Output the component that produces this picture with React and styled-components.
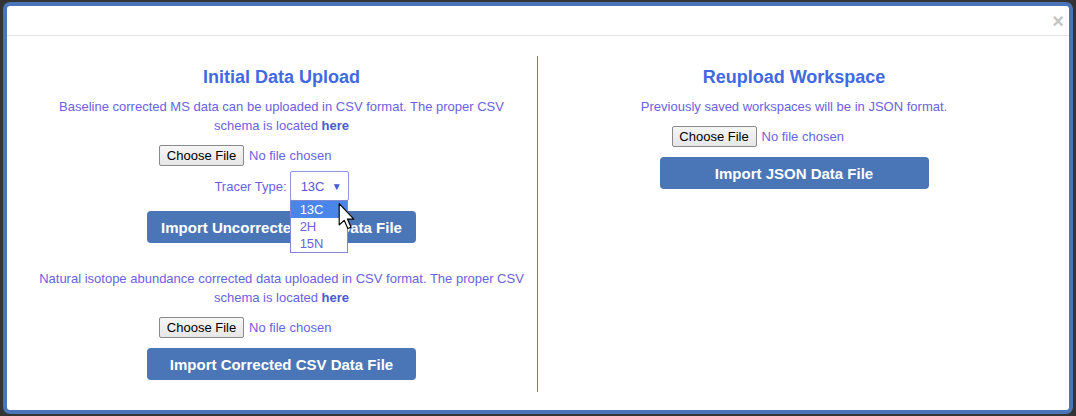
import React from "react";
import styled, { createGlobalStyle } from "styled-components";

const GlobalStyle = createGlobalStyle`
  html, body { margin: 0; padding: 0; }
  body {
    background: #343434;
    font-family: "Liberation Sans", Arial, sans-serif;
  }
`;

const Page = styled.div`
  width: 1076px;
  height: 416px;
  box-sizing: border-box;
  padding: 2px 3px 2px 3px;
`;

const Modal = styled.div`
  width: 1070px;
  height: 412px;
  box-sizing: border-box;
  border: 4px solid #4a74b8;
  border-radius: 7px;
  background: #fff;
  display: flex;
  flex-direction: column;
  overflow: hidden;
`;

const Header = styled.div`
  height: 29px;
  border-bottom: 1px solid #e5e5e5;
  display: flex;
  justify-content: flex-end;
  align-items: center;
  padding-right: 5px;
`;

const Close = styled.span`
  font-size: 20px;
  font-weight: bold;
  color: #c4c4c4;
  line-height: 1;
  margin-top: 1px;
`;

const Body = styled.div`
  flex: 1;
  padding: 20px 19px 18px 19px;
  display: grid;
  grid-template-columns: 512px 512px;
`;

const Column = styled.div`
  display: flex;
  flex-direction: column;
  align-items: center;
  text-align: center;
  padding: 11px 10px 0;
  box-sizing: border-box;
  border-right: ${(p) => (p.$divider ? "1px solid #5a7dc2" : "none")};
`;

const Title = styled.h2`
  margin: 0;
  font-size: 18px;
  line-height: 20px;
  font-weight: bold;
  color: #4169e1;
`;

const Text = styled.p`
  margin: ${(p) => p.$mt || 10}px 0 0;
  font-size: 13px;
  line-height: 19px;
  color: #6a62e2;
`;

const Link = styled.a`
  font-weight: bold;
  color: #4d58d2;
  text-decoration: none;
`;

const FileInput = styled.div`
  margin-top: 10px;
  width: 245px;
  height: 21px;
  display: flex;
  align-items: center;
  gap: 5px;
`;

const ChooseButton = styled.button`
  width: 85px;
  height: 21px;
  box-sizing: border-box;
  padding: 0;
  border: 1px solid #8a8a8a;
  border-radius: 2px;
  background: linear-gradient(#f6f6f6, #e6e6e6);
  font-family: "Liberation Sans", Arial, sans-serif;
  font-size: 13px;
  color: #000;
`;

const NoFile = styled.span`
  font-size: 13px;
  color: #6a62e2;
`;

const TracerRow = styled.div`
  margin-top: 5px;
  height: 30px;
  display: flex;
  align-items: center;
  gap: 3px;
  font-size: 13px;
  color: #6a62e2;
`;

const SelectWrap = styled.div`
  position: relative;
`;

const SelectBox = styled.div`
  width: 59px;
  height: 30px;
  box-sizing: border-box;
  border: 1px solid #8d97e4;
  border-radius: 2px;
  display: flex;
  align-items: center;
  justify-content: space-between;
  padding: 0 6px 0 10px;
  font-size: 13px;
  color: #5a55d6;
  background: #fff;
`;

const Caret = styled.span`
  font-size: 10px;
  color: #4a5ad0;
`;

const DropList = styled.div`
  position: absolute;
  top: 29px;
  left: 0;
  width: 58px;
  box-sizing: border-box;
  border: 1px solid #8088d6;
  background: #fff;
  z-index: 2;
  text-align: left;
`;

const Option = styled.div`
  height: 17px;
  line-height: 17px;
  padding-left: 9px;
  font-size: 13px;
  color: ${(p) => (p.$active ? "#fff" : "#6a62e2")};
  background: ${(p) => (p.$active ? "#4a86ea" : "transparent")};
`;

const Cursor = styled.svg`
  position: absolute;
  left: 47px;
  top: 32px;
  z-index: 3;
`;

const ActionButton = styled.button`
  margin-top: ${(p) => p.$mt || 10}px;
  width: 269px;
  height: 32px;
  border: none;
  border-radius: 4px;
  background: #4a76b8;
  color: #fff;
  font-family: "Liberation Sans", Arial, sans-serif;
  font-size: 15px;
  font-weight: bold;
`;

function FileField() {
  return (
    <FileInput>
      <ChooseButton>Choose File</ChooseButton>
      <NoFile>No file chosen</NoFile>
    </FileInput>
  );
}

export default function App() {
  return (
    <>
      <GlobalStyle />
      <Page>
        <Modal>
          <Header>
            <Close>×</Close>
          </Header>
          <Body>
            <Column $divider>
              <Title>Initial Data Upload</Title>
              <Text>
                Baseline corrected MS data can be uploaded in CSV format. The proper CSV schema is located{" "}
                <Link>here</Link>
              </Text>
              <FileField />
              <TracerRow>
                <span>Tracer Type:</span>
                <SelectWrap>
                  <SelectBox>
                    <span>13C</span>
                    <Caret>▼</Caret>
                  </SelectBox>
                  <DropList>
                    <Option $active>13C</Option>
                    <Option>2H</Option>
                    <Option>15N</Option>
                  </DropList>
                  <Cursor width="20" height="27" viewBox="0 0 12 19">
                    <path
                      d="M0.5 0.5 L0.5 15.5 L4 12.2 L6.6 18 L8.8 17 L6.3 11.3 L10.8 11.3 Z"
                      fill="#fff"
                      stroke="#000"
                      strokeWidth="0.8"
                      strokeLinejoin="round"
                    />
                  </Cursor>
                </SelectWrap>
              </TracerRow>
              <ActionButton>Import Uncorrected CSV Data File</ActionButton>
              <Text $mt={26}>
                Natural isotope abundance corrected data uploaded in CSV format. The proper CSV schema is located{" "}
                <Link>here</Link>
              </Text>
              <FileField />
              <ActionButton>Import Corrected CSV Data File</ActionButton>
            </Column>
            <Column>
              <Title>Reupload Workspace</Title>
              <Text>Previously saved workspaces will be in JSON format.</Text>
              <FileField />
              <ActionButton>Import JSON Data File</ActionButton>
            </Column>
          </Body>
        </Modal>
      </Page>
    </>
  );
}
